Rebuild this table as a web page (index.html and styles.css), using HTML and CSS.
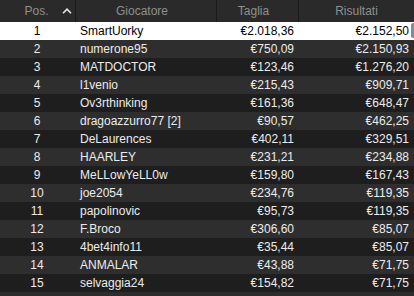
FILE: index.html
```html
<!DOCTYPE html>
<html lang="it">
<head>
<meta charset="utf-8">
<link rel="stylesheet" href="styles.css">
</head>
<body>
<div class="table">
  <div class="head">
    <div class="hcell pos">Pos.<svg class="caret" width="10" height="6" viewBox="0 0 10 6"><path d="M1 5.2 L5 1.2 L9 5.2" fill="none" stroke="#e6e6e6" stroke-width="1.6"/></svg></div>
    <div class="hcell name">Giocatore</div>
    <div class="hcell size">Taglia</div>
    <div class="hcell last">Risultati</div>
  </div>
  <div class="rows">
    <div class="row sel"><span class="c-pos">1</span><span class="c-name">SmartUorky</span><span class="c-num">€2.018,36</span><span class="c-num r">€2.152,50</span></div>
    <div class="row"><span class="c-pos">2</span><span class="c-name">numerone95</span><span class="c-num">€750,09</span><span class="c-num r">€2.150,93</span></div>
    <div class="row"><span class="c-pos">3</span><span class="c-name">MATDOCTOR</span><span class="c-num">€123,46</span><span class="c-num r">€1.276,20</span></div>
    <div class="row"><span class="c-pos">4</span><span class="c-name">l1venio</span><span class="c-num">€215,43</span><span class="c-num r">€909,71</span></div>
    <div class="row"><span class="c-pos">5</span><span class="c-name">Ov3rthinking</span><span class="c-num">€161,36</span><span class="c-num r">€648,47</span></div>
    <div class="row"><span class="c-pos">6</span><span class="c-name">dragoazzurro77 [2]</span><span class="c-num">€90,57</span><span class="c-num r">€462,25</span></div>
    <div class="row"><span class="c-pos">7</span><span class="c-name">DeLaurences</span><span class="c-num">€402,11</span><span class="c-num r">€329,51</span></div>
    <div class="row"><span class="c-pos">8</span><span class="c-name">HAARLEY</span><span class="c-num">€231,21</span><span class="c-num r">€234,88</span></div>
    <div class="row"><span class="c-pos">9</span><span class="c-name">MeLLowYeLL0w</span><span class="c-num">€159,80</span><span class="c-num r">€167,43</span></div>
    <div class="row"><span class="c-pos">10</span><span class="c-name">joe2054</span><span class="c-num">€234,76</span><span class="c-num r">€119,35</span></div>
    <div class="row"><span class="c-pos">11</span><span class="c-name">papolinovic</span><span class="c-num">€95,73</span><span class="c-num r">€119,35</span></div>
    <div class="row"><span class="c-pos">12</span><span class="c-name">F.Broco</span><span class="c-num">€306,60</span><span class="c-num r">€85,07</span></div>
    <div class="row"><span class="c-pos">13</span><span class="c-name">4bet4info11</span><span class="c-num">€35,44</span><span class="c-num r">€85,07</span></div>
    <div class="row"><span class="c-pos">14</span><span class="c-name">ANMALAR</span><span class="c-num">€43,88</span><span class="c-num r">€71,75</span></div>
    <div class="row"><span class="c-pos">15</span><span class="c-name">selvaggia24</span><span class="c-num">€154,82</span><span class="c-num r">€71,75</span></div>
  </div>
  <div class="thumb"></div>
</div>
</body>
</html>
```
FILE: styles.css
```css
html, body {
  margin: 0;
  padding: 0;
  background: #2c2c2c;
  font-family: "Liberation Sans", Arial, sans-serif;
  font-size: 12px;
}
.table {
  position: relative;
  width: 414px;
  height: 296px;
  overflow: hidden;
  background: #2c2c2c;
}
.head {
  display: grid;
  grid-template-columns: 76px 141px 82px 115px;
  height: 22px;
  background: #2a2a2a;
}
.hcell {
  position: relative;
  display: flex;
  align-items: center;
  justify-content: center;
  color: #8f8f8f;
  border-right: 1px solid #1b1b1b;
  line-height: 22px;
}
.hcell.pos {
  padding-right: 2px;
}
.hcell.name {
  padding-right: 8px;
}
.hcell.size {
  padding-right: 8px;
}
.hcell.last {
  border-right: none;
}
.caret {
  position: absolute;
  right: 3px;
  top: 8px;
}
.row {
  display: grid;
  grid-template-columns: 76px 141px 82px 115px;
  height: 18px;
  line-height: 18px;
  color: #ececec;
}
.row:nth-child(even) {
  background: #2e2e2e;
}
.row:nth-child(odd) {
  background: #1e1e1e;
}
.row.sel {
  background: #ffffff;
  color: #000000;
}
.c-pos {
  text-align: center;
  padding-right: 2px;
}
.c-name {
  padding-left: 4px;
  white-space: nowrap;
}
.c-num {
  text-align: right;
  padding-right: 5px;
}
.c-num.r {
  padding-right: 5px;
}
.thumb {
  position: absolute;
  right: 0;
  top: 23px;
  width: 3px;
  height: 15px;
  background: #8a8a8a;
  border-radius: 2px 0 0 2px;
}
```
